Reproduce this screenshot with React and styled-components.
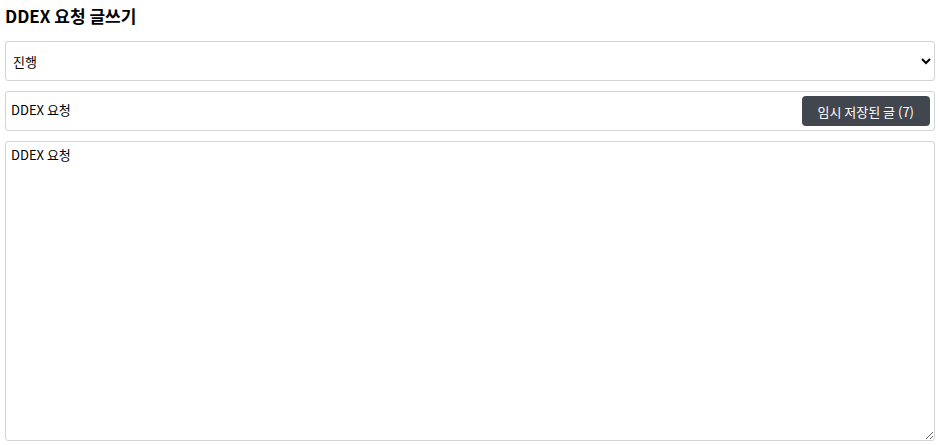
import styled, { createGlobalStyle } from 'styled-components';

const GlobalStyle = createGlobalStyle`
  html, body {
    margin: 0;
    padding: 0;
    background: #fff;
  }
  body {
    font-family: "Noto Sans CJK KR", "Noto Sans", sans-serif;
    color: #000;
  }
`;

const Page = styled.div`
  padding: 0 4px 0 5px;
  display: flex;
  flex-direction: column;
  gap: 10px;
  height: 445px;
  box-sizing: border-box;
`;

const Title = styled.h3`
  margin: 0;
  height: 31px;
  padding-top: 5px;
  box-sizing: border-box;
  font-size: 17px;
  font-weight: 700;
  line-height: 22px;
`;

const Field = styled.div`
  height: 40px;
  box-sizing: border-box;
  border: 1px solid #d4d4d8;
  border-radius: 3px;
  display: flex;
  align-items: center;
  justify-content: space-between;
  padding: 0 4px 0 5px;
`;

const Select = styled.select`
  height: 40px;
  box-sizing: border-box;
  border: 1px solid #d4d4d8;
  border-radius: 3px;
  padding: 0 2px 0 3px;
  font-family: inherit;
  font-size: 13px;
  color: #000;
  background: #fff;
  outline: none;
`;

const TitleInput = styled.input`
  flex: 1;
  border: none;
  outline: none;
  font-family: inherit;
  font-size: 13px;
  color: #000;
  padding: 0;
  margin-top: -3px;
`;

const DraftButton = styled.button`
  height: 30px;
  padding: 0 16px;
  border: none;
  border-radius: 4px;
  background: #42474f;
  color: #fff;
  font-family: inherit;
  font-size: 13px;
  cursor: pointer;
`;

const Body = styled.textarea`
  flex: 1;
  margin-bottom: 4px;
  box-sizing: border-box;
  border: 1px solid #d4d4d8;
  border-radius: 3px;
  padding: 3px 5px;
  font-family: inherit;
  font-size: 13px;
  color: #000;
  outline: none;
  resize: vertical;
`;

export default function App() {
  return (
    <>
      <GlobalStyle />
      <Page>
        <Title>DDEX 요청 글쓰기</Title>
        <Select defaultValue="진행">
          <option>진행</option>
          <option>완료</option>
        </Select>
        <Field>
          <TitleInput defaultValue="DDEX 요청" />
          <DraftButton>임시 저장된 글 (7)</DraftButton>
        </Field>
        <Body defaultValue="DDEX 요청" />
      </Page>
    </>
  );
}
